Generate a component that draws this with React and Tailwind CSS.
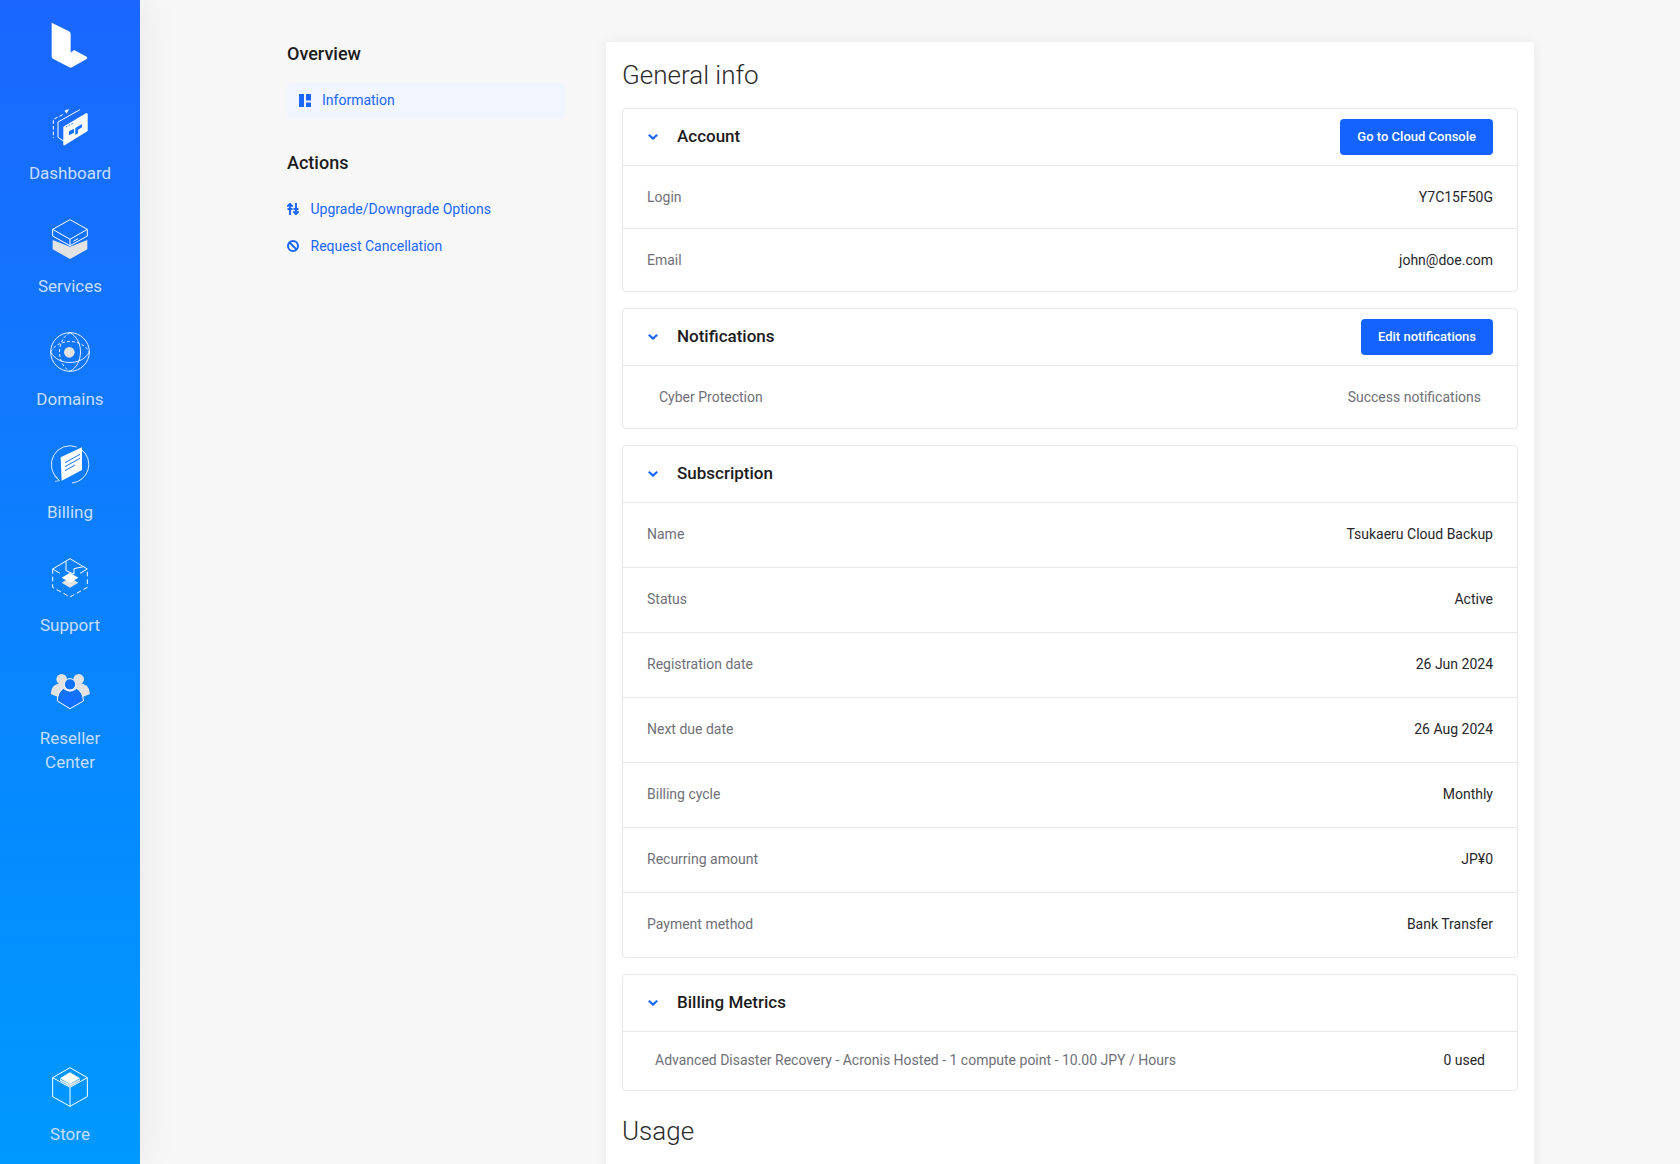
import React from "react";

const SOLID = "#ffffff";
const GREY = "#e2e2e2";
const BG = "#1272ff";

const Logo = () => (
  <svg viewBox="150 60 120 150" className="h-[50px] w-[40px]">
    <path d="M155 68 L207 94 Q212 97 212 103 L212 158 L222 150 L260 170 Q264 174 260 177 L216 202 Q212 204 208 202 L160 177 Q155 174 155 170 Z" fill={SOLID} />
  </svg>
);

const DashboardIcon = () => (
  <svg viewBox="150 318 120 120" className="h-10 w-10" fill="none" stroke={SOLID} strokeWidth="3">
    <path d="M188 344 L160 358 V414" strokeDasharray="11 6" />
    <path d="M194 332 L206 328 L200 340 Z" fill={SOLID} strokeWidth="1" />
    <path d="M240 329 L174 366 V412 L192 424" />
    <path d="M190 380 L258 340 Q263 338 263 343 V393 L194 436 Q190 438 190 433 Z" fill={SOLID} stroke="none" />
    <path d="M198 381 L222 368" stroke={BG} strokeWidth="3" strokeDasharray="5 4" />
    <path d="M207 394 L222 386 V398 L207 406 Z M226 384 L246 372 V382 L234 389 V400 L226 405 Z M214 408 L226 401" fill={BG} stroke="none" />
  </svg>
);

const ServicesIcon = () => (
  <svg viewBox="150 657 120 120" className="h-10 w-10" fill="none" stroke={SOLID} strokeWidth="3">
    <path d="M158 720 L210 740 L262 720 V748 L210 777 L158 748 Z" fill={GREY} stroke="none" />
    <path d="M210 659 L262 688 V708 L210 737 L158 708 V688 Z" fill={BG} />
    <path d="M158 688 L210 718 L262 688 M210 718 V737 M220 724 L234 716" />
  </svg>
);

const DomainsIcon = () => (
  <svg viewBox="150 996 120 120" className="h-10 w-10" fill="none" stroke={SOLID} strokeWidth="2.6">
    <circle cx="210" cy="1056" r="58" />
    <circle cx="208" cy="1057" r="16" fill={GREY} stroke="none" />
    <path d="M210 998 C252 1020 252 1092 210 1114" />
    <path d="M210 998 C168 1020 168 1092 210 1114" strokeDasharray="9 6" />
    <path d="M152 1056 C174 1098 246 1098 268 1056" />
    <path d="M152 1056 C174 1014 246 1014 268 1056" strokeDasharray="9 6" />
  </svg>
);

const BillingIcon = () => (
  <svg viewBox="150 75 120 120" className="h-10 w-10" fill="none" stroke={SOLID} strokeWidth="2.6">
    <path d="M230 81 A56 56 0 0 0 175 177" />
    <path d="M163 168 L179 182 L165 184" strokeWidth="2" />
    <path d="M246 90 A56 56 0 0 1 216 189" />
    <path d="M182 112 L246 82 V150 L185 182 Z" fill={SOLID} stroke="none" />
    <path d="M195 128 L240 103 M195 140 L240 115 M195 152 L225 135" stroke={BG} strokeWidth="3" />
  </svg>
);

const SupportIcon = () => (
  <svg viewBox="150 414 120 120" className="h-10 w-10" fill="none" stroke={SOLID} strokeWidth="3">
    <path d="M158 447 V502 L210 531 L262 502 V447" strokeDasharray="14 9" />
    <path d="M158 447 L210 416 L262 447 L240 460 M180 460 L158 447 M198 424 V452 L222 462 V446 L250 440" />
    <path d="M185 488 L210 473 L235 488 L210 503 Z" fill={GREY} stroke="none" />
    <path d="M185 473 L210 458 L235 473 L210 488 Z" fill={SOLID} stroke="none" />
  </svg>
);

const ResellerIcon = () => (
  <svg viewBox="150 753 120 120" className="h-10 w-10" fill="none" stroke={SOLID} strokeWidth="3">
    <circle cx="185" cy="778" r="16" fill={GREY} stroke="none" />
    <circle cx="236" cy="778" r="16" fill={GREY} stroke="none" />
    <path d="M152 822 Q154 790 185 790 H236 Q268 790 270 822 L250 830 H172 Z" fill={GREY} stroke="none" />
    <path d="M190 805 Q172 818 172 843 L210 866 L250 843 Q250 818 230 805 Q210 822 190 805 Z" fill={BG} />
    <circle cx="210" cy="793" r="17" fill={BG} />
  </svg>
);

const StoreIcon = () => (
  <svg viewBox="150 81 120 120" className="h-10 w-10" fill="none" stroke={SOLID} strokeWidth="3">
    <path d="M180 117 L210 132 L240 117 V122 L210 140 L180 122 Z" fill={GREY} stroke="none" />
    <path d="M180 115 L210 97 L240 115 L210 132 Z" fill={SOLID} stroke="none" />
    <path d="M210 83 L262 113 V170 L210 199 L158 170 V113 Z" />
    <path d="M158 113 L210 142 L262 113 M210 142 V199" />
  </svg>
);

const NavItem = ({ icon, children }) => (
  <a className="flex flex-col items-center gap-[15px] text-center text-[17px] leading-6 text-[#c6deff]">
    {icon}
    <span className="w-[84px]">{children}</span>
  </a>
);

const Sidebar = () => (
  <aside className="relative z-10 flex h-full w-[140px] shrink-0 flex-col items-center bg-gradient-to-b from-[#1a66ff] to-[#0099ff] pt-5 pb-[18px] shadow-[0_0_40px_rgba(0,0,0,0.07)]">
    <div className="mb-9">
      <Logo />
    </div>
    <div className="flex flex-col gap-[34px]">
      <NavItem icon={<DashboardIcon />}>Dashboard</NavItem>
      <NavItem icon={<ServicesIcon />}>Services</NavItem>
      <NavItem icon={<DomainsIcon />}>Domains</NavItem>
      <NavItem icon={<BillingIcon />}>Billing</NavItem>
      <NavItem icon={<SupportIcon />}>Support</NavItem>
      <NavItem icon={<ResellerIcon />}>Reseller Center</NavItem>
    </div>
    <div className="mt-auto">
      <NavItem icon={<StoreIcon />}>Store</NavItem>
    </div>
  </aside>
);

const Chevron = () => (
  <svg viewBox="0 0 10 6" className="h-[6px] w-[10px]" fill="none" stroke="#1a66ff" strokeWidth="2.2">
    <path d="M0.8 0.8 L5 4.6 L9.2 0.8" />
  </svg>
);

const SecondaryMenu = () => (
  <div className="w-[278px] shrink-0 pt-[42px]">
    <h3 className="text-lg leading-6 font-medium text-[#1c1c1c]">Overview</h3>
    <a className="mt-[17px] flex h-9 items-center gap-[11px] rounded bg-[#f0f5ff] pb-[2px] pl-3 text-sm text-[#1a66ff]">
      <svg viewBox="0 0 12 13" className="h-[13px] w-3" fill="#1a66ff">
        <path d="M0 0 H5 V13 H0 Z M7 0 H12 V6.5 H7 Z M7 8.5 H12 V13 H7 Z" />
      </svg>
      Information
    </a>
    <h3 className="mt-8 text-lg leading-6 font-medium text-[#1c1c1c]">Actions</h3>
    <div className="mt-6 flex flex-col gap-[17px] text-sm text-[#1a66ff]">
      <a className="flex h-5 items-center gap-[11.5px]">
        <svg viewBox="0 0 12 12" className="h-3 w-3" fill="none" stroke="#1a66ff">
          <path d="M3 12 V2 M0.3 3.6 L3 0.8 L5.7 3.6 M0.5 6 H5.5" strokeWidth="1.9" />
          <path d="M9 0 V10 M6.3 8.4 L9 11.2 L11.7 8.4 M6.5 6 H11.5" strokeWidth="1.9" />
        </svg>
        Upgrade/Downgrade Options
      </a>
      <a className="flex h-5 items-center gap-[11.5px]">
        <svg viewBox="0 0 12 12" className="h-3 w-3" fill="none" stroke="#1a66ff" strokeWidth="2">
          <circle cx="6" cy="6" r="5" />
          <path d="M2.5 2.5 L9.5 9.5" />
        </svg>
        Request Cancellation
      </a>
    </div>
  </div>
);

const Panel = ({ title, action, children }) => (
  <section className="mb-4 rounded border border-[#e8e8e8]">
    <header className="flex h-[57px] items-center justify-between border-b border-[#e8e8e8] pr-6 pl-[25px]">
      <div className="flex items-center gap-[19px]">
        <Chevron />
        <h4 className="text-[17px] font-medium text-[#1c1c1c]">{title}</h4>
      </div>
      {action && (
        <button className="h-9 rounded bg-[#1463ff] px-[17px] text-[13px] font-medium text-white">{action}</button>
      )}
    </header>
    {children}
  </section>
);

const Row = ({ label, value, tall }) => (
  <div
    className={`flex items-center justify-between border-b border-[#e8e8e8] px-6 text-sm last:border-b-0 ${
      tall ? "h-[65px] pb-[2px] last:h-[64px]" : "h-[63px] last:h-[62px]"
    }`}
  >
    <span className="text-[#6f6f78]">{label}</span>
    <span className="text-[#26262b]">{value}</span>
  </div>
);

const subscription = [
  ["Name", "Tsukaeru Cloud Backup"],
  ["Status", "Active"],
  ["Registration date", "26 Jun 2024"],
  ["Next due date", "26 Aug 2024"],
  ["Billing cycle", "Monthly"],
  ["Recurring amount", "JP¥0"],
  ["Payment method", "Bank Transfer"],
];

const GeneralInfo = () => (
  <div className="h-[1200px] w-[928px] shrink-0 rounded bg-white px-4 shadow-[0_0_14px_rgba(0,0,0,0.06)]">
    <h2 className="flex h-[66px] items-center text-[26px] font-light text-[#2b2b2b]">General info</h2>
    <Panel title="Account" action="Go to Cloud Console">
      <Row label="Login" value="Y7C15F50G" />
      <Row label="Email" value="john@doe.com" />
    </Panel>
    <Panel title="Notifications" action="Edit notifications">
      <div className="flex h-[62px] items-center justify-between px-9 text-sm text-[#6f6f78]">
        <span>Cyber Protection</span>
        <span>Success notifications</span>
      </div>
    </Panel>
    <Panel title="Subscription">
      {subscription.map(([label, value]) => (
        <Row key={label} label={label} value={value} tall />
      ))}
    </Panel>
    <Panel title="Billing Metrics">
      <div className="flex h-[58px] items-center justify-between px-8 pb-[3px] text-sm">
        <span className="text-[#6f6f78]">Advanced Disaster Recovery - Acronis Hosted - 1 compute point - 10.00 JPY / Hours</span>
        <span className="text-[#26262b]">0 used</span>
      </div>
    </Panel>
    <h2 className="pt-[4px] text-[26px] leading-10 font-light text-[#2b2b2b]">Usage</h2>
  </div>
);

export default function App() {
  return (
    <div className="flex h-screen overflow-hidden bg-[#f7f7f7] font-['Roboto',sans-serif]">
      <Sidebar />
      <main className="flex flex-1 gap-[41px] pl-[147px]">
        <SecondaryMenu />
        <div className="pt-[42px]">
          <GeneralInfo />
        </div>
      </main>
    </div>
  );
}
